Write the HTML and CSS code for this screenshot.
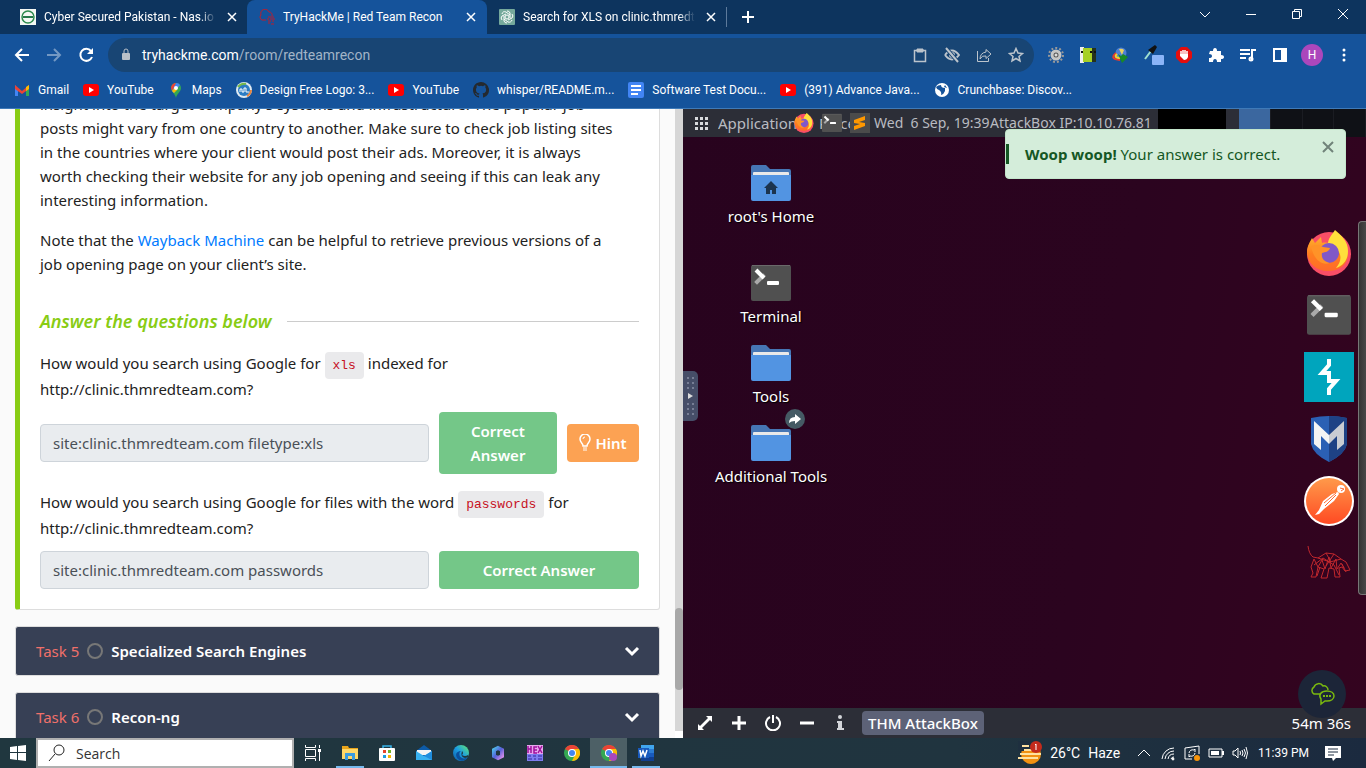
FILE: index.html
```html
<!DOCTYPE html>
<html lang="en">
<head>
<meta charset="utf-8">
<title>TryHackMe | Red Team Recon</title>
<link rel="stylesheet" href="styles.css">
</head>
<body>
<svg class="defs" aria-hidden="true">
  <defs>
    <linearGradient id="fox" x1="0" y1="0" x2="0" y2="1"><stop offset="0" stop-color="#ffb02e"/><stop offset="0.5" stop-color="#ff7e1f"/><stop offset="1" stop-color="#ff6a2a"/></linearGradient>
    <linearGradient id="post" x1="0" y1="0" x2="0" y2="1"><stop offset="0" stop-color="#ff9a4a"/><stop offset="1" stop-color="#ff4a23"/></linearGradient>
    <linearGradient id="edge" x1="0" y1="1" x2="1" y2="0"><stop offset="0" stop-color="#0c59a4"/><stop offset="0.5" stop-color="#1b9de2"/><stop offset="1" stop-color="#66eb6e"/></linearGradient>
    <linearGradient id="m365" x1="0" y1="0" x2="1" y2="1"><stop offset="0" stop-color="#4fb8e8"/><stop offset="0.5" stop-color="#5560d8"/><stop offset="1" stop-color="#d18be8"/></linearGradient>
  </defs>
  <symbol id="firefox" viewBox="0 0 44 46">
    <circle cx="22" cy="24" r="22" fill="#f94e66"/>
    <path d="M0 22C0 16 3 12 5 8l3 5 6-6 1 6c4-1 8 0 11 2l15 8c0 12-8 18-20 18S0 33 0 22z" fill="url(#fox)"/>
    <path d="M28 0c6 5 13 11 13 21 0 9-5 15-12 17 4-5 6-10 3-16-3-5-7-7-11-8 0-6 4-9 7-14z" fill="#ffe03c"/>
    <circle cx="22" cy="23" r="10" fill="#8058c8"/>
    <path d="M4 17c4-3 8-2 12 0l7 1c-1 4-5 4-8 5-1 5 2 9 8 10-9 3-16-4-19-16z" fill="#ff9328"/>
  </symbol>
  <symbol id="term" viewBox="0 0 40 36">
    <rect width="40" height="36" rx="2" fill="#505050"/><path d="M1 .5h38" stroke="#6a6a6a"/>
    <path d="M6 17l6-6" stroke="#aaa" stroke-width="4" stroke-linecap="square"/><path d="M5 5l8 8" stroke="#fff" stroke-width="4"/><rect x="16" y="16" width="12" height="4" rx="1" fill="#fff"/>
  </symbol>
  <symbol id="folder" viewBox="0 0 40 36">
    <path d="M0 2q0-2 2-2h13l4 4h19q2 0 2 2v28H0z" fill="#4676b4"/><rect x="2" y="7" width="36" height="5" rx="1" fill="#e9e9e9"/><path d="M0 10h40v24q0 2-2 2H2q-2 0-2-2z" fill="#5294e2"/>
  </symbol>
  <symbol id="yt" viewBox="0 0 16 16"><rect y="2" width="16" height="12" rx="3" fill="#f00"/><path d="M6 5v6l5-3z" fill="#fff"/></symbol>
  <symbol id="close" viewBox="0 0 16 16"><path d="M4 4l8 8M12 4l-8 8" stroke="#fff" stroke-width="1.500"/></symbol>
  <symbol id="chrome" viewBox="0 0 16 16">
    <circle cx="8" cy="8" r="8" fill="#34a853"/><path d="M8 8L1 4a8 8 0 0 1 14 0z" fill="#ea4335"/><path d="M8 4h7a8 8 0 0 1-7 12l4-8z" fill="#fbbc05"/><circle cx="8" cy="8" r="4" fill="#fff"/><circle cx="8" cy="8" r="3" fill="#4285f4"/>
  </symbol>
  <symbol id="down" viewBox="0 0 16 16"><path d="M2 5l6 6 6-6" fill="none" stroke="#fff" stroke-width="3"/></symbol>
</svg>

<header class="tabs">
  <div class="tab">
    <svg class="i16" viewBox="0 0 16 16"><rect width="16" height="16" fill="#f4f8f4"/><circle cx="8" cy="8" r="6" fill="none" stroke="#2d8b4e" stroke-width="1.500"/><path d="M3 7h10v2H3z" fill="#25784a"/></svg>
    <span class="tab-title">Cyber Secured Pakistan - Nas.io Membership</span>
    <button class="plain" aria-label="Close tab"><svg class="i16"><use href="#close"/></svg></button>
  </div>
  <div class="tab active">
    <svg class="i16" viewBox="0 0 16 16" fill="none" stroke="#c11d2b"><path d="M7 11H3a3 3 0 0 1-1-5 4 4 0 0 1 8-3 3 3 0 0 1 3 4M9 8h6M8 10h2M11 10h5M9 12h3M13 12h2M9 14h2M12 15h3"/></svg>
    <span class="tab-title">TryHackMe | Red Team Recon</span>
    <button class="plain" aria-label="Close tab"><svg class="i16"><use href="#close"/></svg></button>
  </div>
  <div class="tab last">
    <svg class="i16" viewBox="0 0 16 16" fill="none" stroke="#fff"><rect width="16" height="16" rx="1" fill="#75a99c" stroke="none"/><circle cx="8" cy="8" r="2"/><path d="M8 2a3 3 0 0 1 3 2v5M13 5a3 3 0 0 1 0 4l-4 2M13 11a3 3 0 0 1-4 2L5 10M8 14a3 3 0 0 1-3-2V7M3 11a3 3 0 0 1 0-4l4-2M3 5a3 3 0 0 1 4-2l4 3"/></svg>
    <span class="tab-title">Search for XLS on clinic.thmredteam.com</span>
    <button class="plain" aria-label="Close tab"><svg class="i16"><use href="#close"/></svg></button>
  </div>
  <button class="plain new-tab" aria-label="New tab"><svg class="i16" viewBox="0 0 16 16"><path d="M8 2v12M2 8h12" stroke="#fff" stroke-width="2"/></svg></button>
  <div class="window-controls">
    <button class="plain" aria-label="Search tabs"><svg class="i16" viewBox="0 0 16 16"><path d="M3 6l5 5 5-5" fill="none" stroke="#fff"/></svg></button>
    <button class="plain" aria-label="Minimize"><svg class="i16" viewBox="0 0 16 16"><path d="M3 8.500h10" stroke="#fff"/></svg></button>
    <button class="plain" aria-label="Restore"><svg class="i16" viewBox="0 0 16 16" fill="none" stroke="#fff"><path d="M3.500 5.500h7v7h-7zM5.500 5V3.500h7v7H11"/></svg></button>
    <button class="plain" aria-label="Close"><svg class="i16" viewBox="0 0 16 16"><path d="M3 3l10 10M13 3L3 13" stroke="#fff"/></svg></button>
  </div>
</header>

<nav class="toolbar">
  <div class="nav-buttons">
    <button class="plain" aria-label="Back"><svg class="i16" viewBox="0 0 16 16" fill="none" stroke="#fff" stroke-width="2"><path d="M15 8H2M8 2L2 8l6 6"/></svg></button>
    <button class="plain dim" aria-label="Forward"><svg class="i16" viewBox="0 0 16 16" fill="none" stroke="#fff" stroke-width="2"><path d="M1 8h13M8 2l6 6-6 6"/></svg></button>
    <button class="plain" aria-label="Reload"><svg class="i16" viewBox="0 0 16 16"><path d="M13 4a6 6 0 1 0 1 6" fill="none" stroke="#fff" stroke-width="2"/><path d="M15 1v6H9z" fill="#fff"/></svg></button>
  </div>
  <div class="omnibox">
    <svg class="i16" viewBox="0 0 16 16"><rect x="4" y="6" width="8" height="7" rx="1" fill="#b9c0c8"/><path d="M6 7V4a2 2 0 0 1 4 0v3" fill="none" stroke="#b9c0c8"/></svg>
    <div class="url"><b>tryhackme.com</b>/room/redteamrecon</div>
    <div class="omni-icons">
      <svg class="i16" viewBox="0 0 16 16" fill="none" stroke="#bcc4cc"><rect x="2.500" y="3.500" width="11" height="11" stroke-width="1.500"/><path d="M5 2h6v3H5z" fill="#bcc4cc"/></svg>
      <svg class="i16" viewBox="0 0 16 16" fill="none" stroke="#bcc4cc" stroke-width="2"><path d="M1 8q7-9 14 0-7 9-14 0"/><circle cx="8" cy="8" r="2"/><path d="M2 1l12 14" stroke="#184574" stroke-width="4"/><path d="M2 1l12 14"/></svg>
      <svg class="i16" viewBox="0 0 16 16" fill="none" stroke="#bcc4cc"><path d="M1.500 4v10.500h11V11M10 2.500l5 4.500-5 4.500V9Q6 8 4 12q0-6 6-7z"/></svg>
      <svg class="i16" viewBox="0 0 16 16" fill="none" stroke="#bcc4cc" stroke-width="1.500"><path d="M8 1.500l2 4.500 4.500.500-3.500 3 1 4.500-4-2.500L4 14l1-4.500-3.500-3L6 6z"/></svg>
    </div>
  </div>
  <div class="extensions">
    <svg class="i16" viewBox="0 0 16 16"><circle cx="8" cy="8" r="7" fill="none" stroke="#999" stroke-width="2" stroke-dasharray="2 2"/><circle cx="8" cy="8" r="4" fill="#555" stroke="#c6c6c6" stroke-width="3"/><circle cx="8" cy="8" r="1.500" fill="#ddd"/></svg>
    <svg class="i16" viewBox="0 0 16 16"><path d="M0 0h4v16H0z" fill="#eee"/><path d="M3 1h9v14H3z" fill="#a6d024"/><path d="M12 1h4v14h-4z" fill="#25321c"/><path d="M1 5h2M10 5h2M14 5h2" stroke="#111" stroke-width="2"/></svg>
    <svg class="i16" viewBox="0 0 16 16"><circle cx="9" cy="6" r="5.500" fill="#4e7fd4"/><path d="M7 2q3-1 5 1l-2 5z" fill="#e9d35c"/><path d="M4 6q-7 6 4 7" fill="none" stroke="#e73b2e" stroke-width="2"/><path d="M5 7q-4 4 4 4" fill="none" stroke="#f6d32d" stroke-width="2"/><path d="M6 7l3 2 2-2 5 3-6 6z" fill="#188a26"/></svg>
    <svg class="i20" viewBox="0 0 20 20"><path d="M1 14l6-8" stroke="#9fe0d0" stroke-width="2"/><path d="M4 5l7-5 2 2-4 7z" fill="#111"/><rect x="8" y="10" width="12" height="10" rx="1" fill="#8ab4f8"/></svg>
    <svg class="i16" viewBox="0 0 16 16"><path d="M5 0h6l5 5v6l-5 5H5l-5-5V5z" fill="#e40d0d"/><path d="M5 8V4M7 8V3M9 8V3M11 8V4" stroke="#fff" stroke-width="1.500"/><path d="M4 7h8v3q-1 3-4 3l-4-4z" fill="#fff"/></svg>
    <svg class="i16" viewBox="0 0 16 16"><path d="M2 4h3q0-3 2-3t2 3h4v4q3 0 3 2t-3 2v3H9q0-3-2-3t-2 3H1v-4q3 0 3-2T1 7z" fill="#fff"/></svg>
    <svg class="i16" viewBox="0 0 16 16" fill="none" stroke="#fff" stroke-width="2"><path d="M0 3h10M0 7h10M0 11h6M12 13V3h4"/><circle cx="11" cy="12" r="1.500"/></svg>
    <svg class="i16" viewBox="0 0 16 16"><path d="M1 1h14v14H1zm2 2v10h6V3z" fill="#fff" fill-rule="evenodd"/></svg>
    <button class="avatar">H</button>
    <svg class="i16" viewBox="0 0 16 16" fill="#fff"><circle cx="8" cy="3" r="1.500"/><circle cx="8" cy="8" r="1.500"/><circle cx="8" cy="13" r="1.500"/></svg>
  </div>
</nav>

<nav class="bookmarks">
  <a href="#"><svg class="i16" viewBox="0 0 16 16"><path d="M1 3v11h3V7z" fill="#4285f4"/><path d="M15 3v11h-3V7z" fill="#34a853"/><path d="M1 3l7 6 7-6v4l-7 5-7-5z" fill="#ea4335"/><path d="M12 5l3-2v4l-3 2z" fill="#fbbc04"/></svg>Gmail</a>
  <a href="#"><svg class="i16"><use href="#yt"/></svg>YouTube</a>
  <a href="#"><svg class="i16" viewBox="0 0 16 16"><path d="M3 6a5 5 0 0 1 10 0c0 4-4 5-5 10C7 11 3 10 3 6z" fill="#34a853"/><path d="M3 6a5 5 0 0 1 5-5l-1 5-3 3z" fill="#ea4335"/><path d="M8 1q3 0 4 2L6 11 4 9z" fill="#4285f4"/><path d="M4 9l3-4 2 3-3 3z" fill="#fbbc04"/><circle cx="8" cy="6" r="2" fill="#fff"/></svg>Maps</a>
  <a href="#"><svg class="i16" viewBox="0 0 16 16"><circle cx="8" cy="8" r="8" fill="#dfeaf2"/><circle cx="8" cy="8" r="6" fill="#2b7cc4"/><path d="M2 5q3-4 8-3" stroke="#76b84a" fill="none" stroke-width="2"/><path d="M11 14q4-2 4-6" stroke="#e7853e" fill="none" stroke-width="2"/><path d="M4 10V7h2v3h2V6h2v4h3" stroke="#fff" fill="none"/></svg>Design Free Logo: 3...</a>
  <a href="#"><svg class="i16"><use href="#yt"/></svg>YouTube</a>
  <a href="#"><svg class="i16" viewBox="0 0 16 16"><path fill="#24292f" d="M8 0C3.580 0 0 3.580 0 8c0 3.540 2.290 6.530 5.470 7.590.4.070.55-.17.55-.38v-1.490c-2.010.37-2.530-.49-2.690-.94-.09-.23-.48-.94-.82-1.130-.28-.15-.68-.52-.01-.53.63-.01 1.080.58 1.230.82.72 1.210 1.870.87 2.330.66.07-.52.28-.87.51-1.070-1.780-.2-3.640-.89-3.640-3.950 0-.87.31-1.590.82-2.150-.08-.2-.36-1.020.08-2.120 0 0 .67-.21 2.200.82a7.600 7.600 0 0 1 4 0c1.530-1.040 2.200-.82 2.200-.82.44 1.100.16 1.920.08 2.120.51.56.82 1.270.82 2.150 0 3.070-1.870 3.750-3.650 3.950.29.25.54.73.54 1.480v2.200c0 .21.150.46.550.38A8 8 0 0 0 8 0z"/></svg>whisper/README.m...</a>
  <a href="#"><svg class="i16" viewBox="0 0 16 16"><rect width="16" height="16" rx="2" fill="#4285f4"/><path d="M3 4h10M3 8h10M3 12h7" stroke="#fff" stroke-width="2"/></svg>Software Test Docu...</a>
  <a href="#"><svg class="i16"><use href="#yt"/></svg>(391) Advance Java...</a>
  <a href="#"><svg class="i16" viewBox="0 0 16 16"><circle cx="8" cy="8" r="7" fill="#fff"/><path d="M2 5q2-2 5-2 0 3 4 3v3q-1 3-4 4 1-3-2-5-2 0-3-3zM11 3l2 3-3-1z" fill="#15539b"/></svg>Crunchbase: Discov...</a>
</nav>

<main class="content">
  <section class="room">
    <div class="room-body">
      <article class="card">
        <p>insight into the target company's systems and infrastructure. The popular job posts might vary from one country to another. Make sure to check job listing sites in the countries where your client would post their ads. Moreover, it is always worth checking their website for any job opening and seeing if this can leak any interesting information.</p>
        <p>Note that the <a href="#">Wayback Machine</a> can be helpful to retrieve previous versions of a job opening page on your client’s site.</p>
        <h2>Answer the questions below</h2>
        <label class="question" for="q1">How would you search using Google for <code>xls</code> indexed for http://clinic.thmredteam.com?</label>
        <div class="answer">
          <input id="q1" type="text" value="site:clinic.thmredteam.com filetype:xls" readonly>
          <div class="actions"><button class="correct">Correct Answer</button><button class="hint"><svg viewBox="0 0 12 18" fill="none" stroke="#fff"><path d="M4 12C4 9 1 9 1 5a5 5 0 0 1 10 0c0 4-3 4-3 7z" stroke-width="1.500"/><path d="M4 14h4M4 16h4M6 3q-2 0-2 2"/></svg>Hint</button></div>
        </div>
        <label class="question" for="q2">How would you search using Google for files with the word <code>passwords</code> for http://clinic.thmredteam.com?</label>
        <div class="answer">
          <input id="q2" type="text" value="site:clinic.thmredteam.com passwords" readonly>
          <div class="actions"><button class="correct">Correct Answer</button></div>
        </div>
      </article>
      <button class="task"><span class="task-no">Task 5</span><i class="ring"></i><span class="task-name">Specialized Search Engines</span><svg class="i16"><use href="#down"/></svg></button>
      <button class="task"><span class="task-no">Task 6</span><i class="ring"></i><span class="task-name">Recon-ng</span><svg class="i16"><use href="#down"/></svg></button>
    </div>
    <div class="scrollbar"><div class="thumb"></div><div class="grip"></div></div>
  </section>

  <section class="machine">
    <div class="panel">
      <svg class="apps" viewBox="0 0 13 13" fill="#d8dade"><path d="M0 0h3v3H0zM5 0h3v3H5zM10 0h3v3h-3zM0 5h3v3H0zM5 5h3v3H5zM10 5h3v3h-3zM0 10h3v3H0zM5 10h3v3H5zM10 10h3v3h-3z"/></svg>
      <span class="menu">Applications</span>
      <span class="menu">Places</span>
      <div class="launchers">
        <svg class="i20"><use href="#firefox"/></svg>
        <svg class="i20"><use href="#term"/></svg>
        <svg class="i20" viewBox="0 0 20 20"><rect width="20" height="20" fill="#4b4b4b"/><path d="M4 7l11-4v4l-6 2 6 1v3L4 17v-4l6-2-6-1z" fill="#ff9800"/></svg>
      </div>
      <span class="clock">Wed&nbsp; 6 Sep, 19:39</span><span class="ip">AttackBox IP:10.10.76.81</span>
      <i class="black"></i><i class="space on"></i><i class="space"></i><i class="space"></i><i class="space"></i>
    </div>

    <div class="desktop">
      <ul class="shortcuts">
        <li class="home"><svg viewBox="0 0 40 36"><use href="#folder"/><path d="M20 16l7 7h-2v6h-4v-4h-2v4h-4v-6h-2z" fill="#1c344e"/></svg>root's Home</li>
        <li><svg><use href="#term"/></svg>Terminal</li>
        <li><svg><use href="#folder"/></svg>Tools</li>
        <li><svg><use href="#folder"/></svg>Additional Tools<svg class="link-badge" viewBox="0 0 20 20"><circle cx="10" cy="10" r="10" fill="#455a64"/><path d="M10 5l6 5-6 5v-3q-4 0-6 2 0-6 6-6z" fill="#fff"/></svg></li>
      </ul>
      <button class="handle" aria-label="Resize"><svg viewBox="0 0 15 50"><g fill="#777e95"><path d="M4 6h2v2H4zM9 6h2v2H9zM4 11h2v2H4zM9 11h2v2H9zM4 16h2v2H4zM9 16h2v2H9zM4 32h2v2H4zM9 32h2v2H9zM4 37h2v2H4zM9 37h2v2H9zM4 42h2v2H4zM9 42h2v2H9z"/></g><path d="M5 22l5 3-5 3z" fill="#ddd"/></svg></button>
      <div class="dock">
        <svg class="d-fox"><use href="#firefox"/></svg>
        <svg class="d-term"><use href="#term"/></svg>
        <svg class="d-burp" viewBox="0 0 50 50"><path d="M0 0h50v50H0z" fill="#00a5bd"/><path d="M25 7v6L18 21h7v8h7L25 37v6" fill="none" stroke="#fff" stroke-width="4"/></svg>
        <svg class="d-meta" viewBox="0 0 36 46"><path d="M0 2Q18-2 36 2v26Q34 38 18 46 2 38 0 28z" fill="#2b60b4"/><path d="M18 0q10 0 18 2v26q-2 10-18 18z" fill="#1e4285"/><path d="M3 5l15 14v9l-8-8v14l-7-6z" fill="#f4f4f4"/><path d="M33 5L18 19v9l8-8v14l7-6z" fill="#c9ccd2"/></svg>
        <svg class="d-burp" viewBox="0 0 50 50"><circle cx="25" cy="25" r="25" fill="#fff"/><circle cx="25" cy="25" r="23" fill="url(#post)"/><circle cx="37" cy="13" r="4" fill="#fff"/><path d="M28 18l6-2 1 2-5 7-10 8-5 5-4 1 4-5 4-9z" fill="#fff"/><path d="M20 27l12-10M21 30l11-11M36 12l4 1-3 2" stroke="#ff6a32" fill="none"/></svg>
        <svg class="d-boar" viewBox="0 0 44 34" fill="none" stroke="#c1272d"><path d="M1 1q1 8 5 11l5 1 8-5 8 1 7 5 5 3 4 8-5 1-3-4-3 1 1 9h-5l-1-8-5-1-2 10h-6l3-9-6-2-2 10H4l2-4-2-6 3-8 4 8 4-7 3 9 4-12 2 11 5-9 1 10 4-6 3 5M11 13l12 4 11-3M7 20l9-7 11 7M19 8l5 9M27 9l-8 12M13 22l-3 9M27 20l5 10M35 19l4 8"/></svg>
      </div>
      <div class="side-tray"></div>
      <button class="chat" aria-label="Chat"><svg viewBox="0 0 26 24" fill="none" stroke="#7ab80f" stroke-width="1.500"><path d="M11 12H5a4 4 0 0 1 0-7 5 5 0 0 1 9-1 4 4 0 0 1 5 4"/><path d="M18 9c4 0 7 2 7 5s-3 5-7 5h-2l-4 3v-5c-3-4 0-8 6-8z"/><path d="M14 14h2M17 14h2M20 14h2" stroke-width="2"/></svg></button>
    </div>

    <div class="machine-bar">
      <div class="tools">
        <button class="plain" aria-label="Expand"><svg class="i16" viewBox="0 0 16 16" fill="#fff"><path d="M9 1h6v6l-2-2-8 8 2 2H1V9l2 2 8-8z"/></svg></button>
        <button class="plain" aria-label="Add"><svg class="i16" viewBox="0 0 16 16"><path d="M8 1v14M1 8h14" stroke="#fff" stroke-width="3"/></svg></button>
        <button class="plain" aria-label="Power"><svg class="i16" viewBox="0 0 16 16" fill="none" stroke="#fff" stroke-width="2"><path d="M5 2a7 7 0 1 0 6 0M8 0v8"/></svg></button>
        <button class="plain" aria-label="Minimize"><svg class="i16" viewBox="0 0 16 16"><path d="M1 8h14" stroke="#fff" stroke-width="3"/></svg></button>
        <button class="plain" aria-label="Info"><svg class="i16" viewBox="0 0 16 16" fill="#d4d6da"><circle cx="7" cy="2" r="2"/><path d="M4 6h5v7h2v2H4v-2h1V8H4z"/></svg></button>
      </div>
      <button class="box-name">THM AttackBox</button>
      <span class="timer">54m 36s</span>
    </div>

    <div class="alert" role="alert"><span><b>Woop woop!</b> Your answer is correct.</span><button class="plain" aria-label="Dismiss"><svg class="i16" viewBox="0 0 16 16"><path d="M3 3l10 10M13 3L3 13" stroke="#71837a" stroke-width="2"/></svg></button></div>
  </section>
</main>

<footer class="taskbar">
  <button class="cell start" aria-label="Start"><svg class="i16" viewBox="0 0 16 16" fill="#fff"><path d="M0 2l7-1v6H0zM8 1l8-1v7H8zM0 8h7v7l-7-1zM8 8h8v8l-8-1z"/></svg></button>
  <label class="search"><svg class="i20" viewBox="0 0 20 20" fill="none" stroke="#222"><circle cx="12" cy="7" r="5"/><path d="M8 11l-6 7"/></svg><input type="text" placeholder="Search" aria-label="Search"></label>
  <div class="programs">
    <button class="cell" aria-label="Task view"><svg class="i16" viewBox="0 0 16 16" fill="none" stroke="#fff"><path d="M.5 0v2.500h10V0M.5 4.500h10v7H.5zM.5 16v-2.500h10V16M14.500 0v3M14.500 7v9"/><path d="M13 4h3v3h-3z" fill="#fff" stroke="none"/></svg></button>
    <button class="cell run" aria-label="File Explorer"><svg class="i16" viewBox="0 0 16 16"><path d="M0 1h6l1 2h9v11H0z" fill="#e9a51b"/><path d="M0 4h16v10H0z" fill="#ffd768"/><path d="M3 15V8h10v7h-3v-4H6v4z" fill="#3a9be0"/></svg></button>
    <button class="cell" aria-label="Store"><svg class="i16" viewBox="0 0 16 16"><path d="M4 4V1h8v3" fill="none" stroke="#39b4ea" stroke-width="1.500"/><rect y="3" width="16" height="13" rx="1" fill="#fff"/><path d="M4 5h3v3H4z" fill="#e8432a"/><path d="M9 5h3v3H9z" fill="#71b32a"/><path d="M4 10h3v3H4z" fill="#1b9de2"/><path d="M9 10h3v3H9z" fill="#f7b500"/></svg></button>
    <button class="cell" aria-label="Mail"><svg class="i16" viewBox="0 0 16 16"><path d="M0 6l8-6 8 6v9H0z" fill="#0d5ba8"/><path d="M1 5h14v5H1z" fill="#f4f4f4"/><path d="M0 6l8 5 8-5v9H0z" fill="#38b1f0"/><path d="M8 11l8-5v9z" fill="#1f8ddd"/></svg></button>
    <button class="cell" aria-label="Edge"><svg class="i16" viewBox="0 0 16 16"><circle cx="8" cy="8" r="8" fill="url(#edge)"/><path d="M9 6c-3-1-4 6 0 7 2 1 4 0 6-1-2 4-7 5-10 2S2 6 9 6z" fill="#0b4f9c"/><path d="M9 6q2 2 0 4 3 2 6 0l1 2-4 1q-5-1-3-7z" fill="#20373f"/></svg></button>
    <button class="cell" aria-label="Office"><svg class="i16" viewBox="0 0 16 16"><path d="M8 3l4 2v6l-4 2-4-2V5z" fill="none" stroke="url(#m365)" stroke-width="4"/></svg></button>
    <button class="cell" aria-label="Hex editor"><svg class="i16" viewBox="0 0 16 16"><path d="M0 0h16v9H0z" fill="#e7a7ee"/><path d="M0 9h16v7H0z" fill="#7d7cf0"/><path d="M1 1v7M4 1v7M1 4h3M10 2H7v6h3M7 5h3M11 1l4 7M15 1l-4 7" stroke="#a0109c" stroke-width="1.500" fill="none"/><path d="M1 11h3M6 11h3M11 11h4M1 14h4M7 14h2M11 14h4" stroke="#33259e"/></svg></button>
    <button class="cell" aria-label="Chrome"><svg class="i16"><use href="#chrome"/></svg></button>
    <button class="cell run current" aria-label="Chrome profile"><svg class="i16" viewBox="0 0 16 16"><use href="#chrome"/><circle cx="12" cy="12" r="4" fill="#ab47bc"/></svg></button>
    <button class="cell run" aria-label="Word"><svg class="i16" viewBox="0 0 16 16"><path d="M3 0h13v4H3z" fill="#41a5ee"/><path d="M3 4h13v4H3z" fill="#2b7cd3"/><path d="M3 8h13v4H3z" fill="#185abd"/><path d="M3 12h13v4H3z" fill="#103f91"/><rect y="3" width="11" height="10" fill="#185abd"/><path d="M2 5l1 6 2-5 2 5 2-6" fill="none" stroke="#fff" stroke-width="1.500"/></svg></button>
  </div>
  <div class="tray">
    <svg class="weather" viewBox="0 0 24 24"><circle cx="13" cy="13" r="10" fill="#f29111"/><path d="M0 0h13v10H0z" fill="#1e2f3f"/><path d="M4 5h7M6 9h13M2 13h21M0 17h20" stroke="#ffe1a0" stroke-width="2"/><circle cx="18" cy="6" r="6" fill="#c42b1c"/><path d="M17 4l1-1v6" stroke="#fff" fill="none"/></svg>
    <span class="temp">26°C</span><span class="haze">Haze</span>
    <svg class="i16" viewBox="0 0 16 16"><path d="M2 11l6-6 6 6" fill="none" stroke="#fff"/></svg>
    <svg class="i16" viewBox="0 0 16 16" fill="none" stroke="#fff"><path d="M2 14A12 12 0 0 1 14 3M5 14a9 9 0 0 1 9-8M8 14a6 6 0 0 1 6-5M11 14a3 3 0 0 1 3-2"/><circle cx="13" cy="14" r="1" fill="#fff"/></svg>
    <svg class="i16" viewBox="0 0 16 16" fill="none" stroke="#fff"><path d="M8 14H1V3l14-2v8M5 8q1-4 5-3l1-1v3M11 8q-1 4-5 3l-1 1V9"/><circle cx="13" cy="13" r="3" fill="#f7940a" stroke="none"/></svg>
    <svg class="i16" viewBox="0 0 16 16"><path d="M1 4h13v8H1z" fill="none" stroke="#fff"/><path d="M3 6h8v4H3zM14 6h2v4h-2z" fill="#fff"/></svg>
    <svg class="i16" viewBox="0 0 16 16" fill="none" stroke="#fff"><path d="M1 6h2l3-3v10l-3-3H1zM8 6q1 2 0 4M10 5q2 3 0 6M12 4q3 4 0 8M14 2q3 6 0 12"/></svg>
    <span class="time">11:39 PM</span>
    <svg class="i16" viewBox="0 0 16 16"><path d="M0 1h16v12h-5l-3 3-1-3H0z" fill="#fff"/><path d="M3 4h10M3 7h10M3 10h6" stroke="#1b2a3f"/></svg>
  </div>
</footer>
</body>
</html>
```
FILE: styles.css
```css
* { box-sizing: border-box; }

body {
  margin: 0;
  height: 100vh;
  display: flex;
  flex-direction: column;
  overflow: hidden;
  font-family: Roboto, "Open Sans", sans-serif;
  font-size: 12px;
  color: #fff;
  background: #15539b;
}

svg { display: block; flex: none; }
button, input { font: inherit; color: inherit; }
button { border: 0; padding: 0; cursor: pointer; }
.defs { position: absolute; width: 0; height: 0; }
.plain { background: none; display: flex; }
.i16 { width: 16px; height: 16px; }
.i20 { width: 20px; height: 20px; }
.dim { opacity: 0.4; }

/* Browser tabs */
.tabs { display: flex; align-items: stretch; height: 34px; flex: none; background: #0d345e; }
.tab { display: flex; align-items: center; gap: 8px; width: 240px; padding: 0 8px 0 12px; }
.tab:first-child { width: 247px; padding: 0 7px 0 20px; }
.tab.active { background: #15539b; border-radius: 8px 8px 0 0; }
.tab-title {
  flex: 1;
  white-space: nowrap;
  overflow: hidden;
  mask-image: linear-gradient(to right, #000 calc(100% - 16px), transparent);
}
.active .tab-title { mask-image: none; }
.tab.last { background: linear-gradient(#5d7a9b, #5d7a9b) no-repeat right center / 1px 20px; }
.new-tab { align-items: center; padding: 0 13px; }
.window-controls { display: flex; align-items: center; gap: 30px; margin: 0 15px 6px auto; }

/* Address bar */
.toolbar { display: flex; align-items: center; height: 42px; flex: none; padding-right: 14px; }
.nav-buttons { display: flex; gap: 16px; padding: 0 14px; }
.omnibox {
  flex: 1;
  display: flex;
  align-items: center;
  gap: 8px;
  height: 34px;
  padding: 0 10px;
  border-radius: 17px;
  background: #184574;
}
.url { flex: 1; font-size: 14px; color: #a2b4c7; }
.url b { font-weight: 400; color: #fff; }
.omni-icons { display: flex; gap: 16px; }
.extensions { display: flex; align-items: center; gap: 16px; padding-left: 14px; }
.extensions .i20 { margin-right: -4px; }
.avatar { width: 22px; height: 22px; border-radius: 50%; background: #ab47bc; margin: 0 -3px; }

/* Bookmarks */
.bookmarks {
  display: flex;
  align-items: center;
  gap: 14px;
  height: 33px;
  flex: none;
  padding: 0 14px 4px;
  border-bottom: 1px solid #3f7ab8;
}
.bookmarks a { display: flex; align-items: center; gap: 8px; color: #fff; text-decoration: none; white-space: nowrap; }

/* Room page */
.content { flex: 1; min-height: 0; display: grid; grid-template-columns: 1fr 1fr; }
.room {
  display: flex;
  min-height: 0;
  overflow: hidden;
  background: #fafafa;
  color: #222;
  font: 15px/24px "Noto Sans", sans-serif;
}
.room-body { flex: 1; padding: 0 15px; margin-top: -18px; display: flex; flex-direction: column; gap: 16px; }
.card { background: #fff; border: 1px solid #ddd; border-left: 5px solid #88cc14; border-radius: 3px; padding: 0 20px 20px; }
.card p { margin: 0 0 16px; padding-right: 20px; }
.card p a { color: #007bff; text-decoration: none; }
.card h2 {
  display: flex;
  align-items: center;
  gap: 16px;
  margin: 33px 0 17px;
  font-size: 18px;
  line-height: 24px;
  font-weight: 600;
  font-style: italic;
  color: #88cc14;
}
.card h2::after { content: ""; flex: 1; height: 1px; background: #ccc; }
.question { display: block; line-height: 26px; }
code {
  font: 13px/16px "Liberation Mono", monospace;
  color: #c7111f;
  background: #eaeaec;
  border-radius: 4px;
  padding: 6px 8px;
}
.answer { display: grid; grid-template-columns: 1fr 200px; gap: 10px; align-items: center; padding: 10px 0 15px; }
.answer:last-child { padding-bottom: 0; }
.answer input {
  width: 100%;
  height: 38px;
  padding: 0 12px;
  border: 1px solid #ced4da;
  border-radius: 4px;
  background: #e9ecef;
  color: #495057;
}
.actions { display: flex; align-items: center; gap: 10px; }
.correct { flex: 1; padding: 7px 24px; border-radius: 4px; background: #74c788; color: #fff; font-weight: 600; }
.hint {
  display: flex;
  align-items: center;
  justify-content: center;
  gap: 4px;
  width: 72px;
  height: 38px;
  border-radius: 4px;
  background: #fca253;
  color: #fff;
  font-weight: 600;
}
.hint svg { width: 12px; height: 18px; }
.task {
  display: flex;
  align-items: center;
  gap: 8px;
  height: 50px;
  flex: none;
  padding: 0 19px 0 20px;
  border: 1px solid #ddd;
  border-radius: 3px;
  background: #374055;
  color: #fff;
}
.task-no { color: #f0706a; }
.ring { width: 16px; height: 16px; border: 2px solid #777; border-radius: 50%; }
.task-name { flex: 1; text-align: left; font-weight: 600; }
.scrollbar { width: 8px; background: #d6d6d6; display: flex; flex-direction: column; }
.thumb { height: 82px; margin-top: auto; border-radius: 4px; background: #a8a8a8; }
.grip { height: 7px; margin-top: 41px; background: #fff; }

/* Remote machine */
.machine {
  position: relative;
  display: flex;
  flex-direction: column;
  min-width: 0;
  background: linear-gradient(100deg, #28031e, #2b041f 60%, #34041f);
  font: 15px/20px "Noto Sans", sans-serif;
}
.panel { position: relative; display: flex; align-items: center; height: 28px; background: #2c2e37; padding-left: 12px; color: #b9bbc1; white-space: nowrap; }
.apps { width: 13px; height: 13px; margin-right: 10px; }
.menu { width: 101px; overflow: hidden; }
.menu + .menu { width: 55px; }
.launchers { position: absolute; left: 111px; top: 4px; display: flex; gap: 8px; }
.clock, .ip { font-size: 14px; }
.clock { width: 116px; }
.ip { width: 168px; }
.black { width: 68px; height: 28px; background: #000; margin-right: 13px; }
.space { flex: 1; height: 28px; background: #0f1116; border-right: 1px solid #1a1c22; }
.space.on { background: #3b679f; }
.desktop { position: relative; flex: 1; min-height: 0; display: flex; justify-content: space-between; }
.shortcuts { list-style: none; margin: 0; padding: 28px 0 0 18px; display: flex; flex-direction: column; gap: 16px; }
.shortcuts li {
  position: relative;
  width: 140px;
  height: 64px;
  display: flex;
  flex-direction: column;
  align-items: center;
  gap: 5px;
  text-shadow: 1px 1px 1px #000;
}
.shortcuts svg { width: 40px; height: 36px; }
.shortcuts .home { margin-bottom: 20px; }
.shortcuts .link-badge { position: absolute; right: 36px; top: -16px; width: 20px; height: 20px; }
.handle { position: absolute; left: 0; top: 234px; width: 15px; height: 50px; border-radius: 0 5px 5px 0; background: #464e68; }
.handle svg { width: 15px; height: 50px; }
.dock { display: flex; flex-direction: column; align-items: center; gap: 14px; width: 50px; padding-top: 93px; margin-right: 12px; }
.d-fox { width: 44px; height: 46px; }
.d-term { width: 44px; height: 40px; margin: 5px 0 3px; }
.d-burp { width: 50px; height: 50px; }
.d-meta { width: 36px; height: 46px; }
.d-boar { width: 44px; height: 34px; margin-top: 5px; }
.side-tray { position: absolute; right: 0; top: 84px; width: 8px; height: 374px; border: 1px solid #777; border-right: 0; border-radius: 4px 0 0 4px; background: linear-gradient(to right, #333, #484848); }
.chat { position: absolute; right: 20px; bottom: -10px; width: 48px; height: 48px; border-radius: 50%; background: #1c2538; display: flex; align-items: center; justify-content: center; z-index: 1; }
.chat svg { width: 26px; height: 24px; }
.machine-bar { display: flex; align-items: center; height: 30px; background: #2c2e37; padding: 0 15px 0 14px; }
.tools { display: flex; gap: 18px; }
.box-name { margin-left: 13px; padding: 2px 6px; border-radius: 4px; background: #5d6277; color: #fff; font-weight: 500; }
.timer { margin-left: auto; }
.alert {
  position: absolute;
  top: 20px;
  right: 20px;
  width: 341px;
  height: 50px;
  display: flex;
  align-items: center;
  justify-content: space-between;
  padding: 0 9px 0 19px;
  border: 1px solid #c3e6cb;
  border-radius: 4px;
  background: linear-gradient(#155724, #155724) no-repeat left center / 3px 20px, #d4edda;
  color: #155724;
}
.alert .plain { margin-bottom: 14px; }

/* Taskbar */
.taskbar { display: flex; align-items: stretch; height: 30px; flex: none; background: linear-gradient(to right, #20373f, #20343f 70%, #1b2a3f); }
.cell { width: 37px; display: flex; align-items: center; justify-content: center; background: none; }
.start { width: 36px; }
.run { background: linear-gradient(#76b9ed, #76b9ed) no-repeat center bottom / 28px 2px; }
.current { background: linear-gradient(#76b9ed, #76b9ed) no-repeat center bottom / 100% 2px, #4d6066; }
.search { display: flex; align-items: center; gap: 9px; width: 258px; padding-left: 9px; background: #fff; border: 2px solid #b0b0b0; }
.search input { flex: 1; min-width: 0; border: 0; outline: 0; padding: 0; background: none; color: #333; font-family: "Open Sans", sans-serif; font-size: 14px; }
.search input::placeholder { color: #333; opacity: 1; }
.programs { display: flex; }
.tray { display: flex; align-items: center; gap: 8px; margin-left: auto; padding-right: 25px; }
.weather { width: 24px; height: 24px; }
.temp, .haze { font-size: 14px; }
.haze { margin: 0 8px 0 0; }
.time { margin: 0 8px 0 2px; }
```
